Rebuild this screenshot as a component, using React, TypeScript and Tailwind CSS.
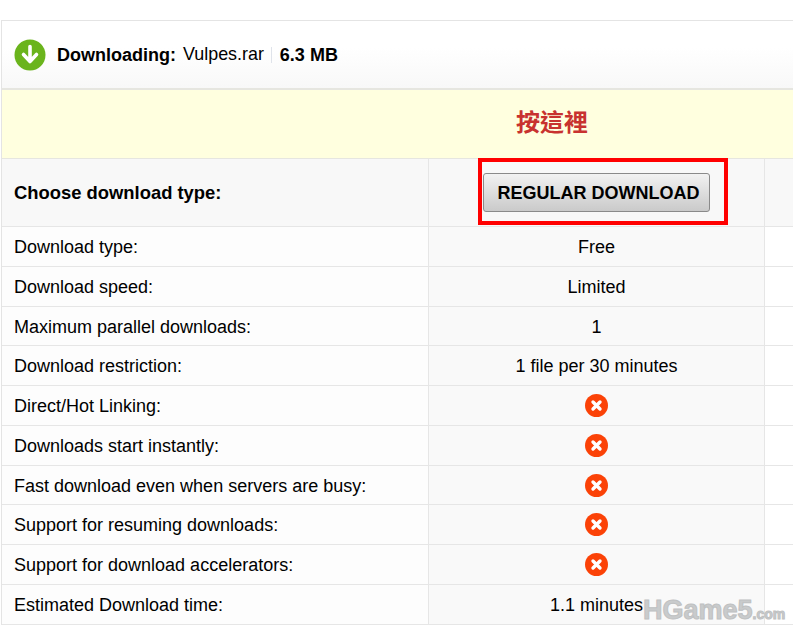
import React from "react";

const font = "font-['Liberation_Sans',Arial,sans-serif]";

function Cross() {
  return (
    <svg width="23" height="23" viewBox="0 0 23 23" className="block">
      <circle cx="11.5" cy="11.5" r="11.5" fill="#fb4207" />
      <path d="M8 8 L15 15 M15 8 L8 15" stroke="#fff" strokeWidth="3.4" strokeLinecap="round" />
    </svg>
  );
}

const rows: { label: string; value?: string; h: string }[] = [
  { label: "Download type:", value: "Free", h: "h-[40px]" },
  { label: "Download speed:", value: "Limited", h: "h-[40px]" },
  { label: "Maximum parallel downloads:", value: "1", h: "h-[39px]" },
  { label: "Download restriction:", value: "1 file per 30 minutes", h: "h-[40px]" },
  { label: "Direct/Hot Linking:", h: "h-[40px]" },
  { label: "Downloads start instantly:", h: "h-[40px]" },
  { label: "Fast download even when servers are busy:", h: "h-[39px]" },
  { label: "Support for resuming downloads:", h: "h-[40px]" },
  { label: "Support for download accelerators:", h: "h-[40px]" },
  { label: "Estimated Download time:", value: "1.1 minutes", h: "h-[40px]" },
];

export default function App() {
  return (
    <div className={`${font} relative w-[793px] h-[634px] overflow-hidden bg-white pt-[20px] pl-[1px] text-black`}>
      <div className="border-t border-l border-[#e4e4e4]">
        <div className="flex items-center h-[67px] pl-[12px] bg-gradient-to-b from-white from-40% to-[#f8f8f8]">
          <svg width="32" height="32" viewBox="0 0 32 32" className="block">
            <circle cx="16" cy="16" r="15.5" fill="#6ab41c" />
            <path d="M16 7.5 V22 M9.5 15.5 L16 22.5 L22.5 15.5" fill="none" stroke="#fff" strokeWidth="3.6" strokeLinecap="round" strokeLinejoin="round" />
          </svg>
          <span className="ml-[11px] text-[18px] font-bold leading-none">Downloading:</span>
          <span className="ml-[7px] text-[17.9px] leading-none">Vulpes.rar</span>
          <span className="ml-[7px] w-[1px] h-[16px] bg-[#dfe3ea]" />
          <span className="ml-[8px] text-[18px] font-bold leading-none">6.3 MB</span>
        </div>
        <div className="flex items-center h-[71px] pl-[514px] bg-[#ffffdf] border-t-2 border-b border-[#e6e6e0]">
          <span className="font-['Noto_Sans_CJK_TC',sans-serif] text-[24px] font-bold leading-none text-[#c8322f] pb-[6px]">按這裡</span>
        </div>
        <div className="flex h-[68px] bg-[#f8f8f8] border-b border-[#e6e6e6]">
          <div className="flex items-center w-[426px] pl-[12px] text-[18.4px] font-bold">Choose download type:</div>
          <div className="flex items-center justify-center w-[337px] border-l border-r border-[#e6e6e6]">
            <button className="w-[227px] h-[39px] rounded-[3px] border border-[#8a8a8a] bg-gradient-to-b from-[#f2f2f2] to-[#cacaca] pl-[4px] text-[18px] font-bold text-black leading-none">
              REGULAR DOWNLOAD
            </button>
          </div>
        </div>
        {rows.map((r) => (
          <div key={r.label} className={`flex ${r.h} border-b border-[#e6e6e6] text-[18px]`}>
            <div className="flex items-center w-[426px] pl-[12px] pt-[2px] bg-[#fdfdfd]">{r.label}</div>
            <div className="flex items-center justify-center w-[337px] border-l border-r border-[#e6e6e6] bg-[#f9f9f9]">
              {r.value ? <span className="pt-[2px]">{r.value}</span> : <Cross />}
            </div>
          </div>
        ))}
      </div>
      <div className="absolute left-[478px] top-[158px] w-[250px] h-[67px] border-4 border-[#ff0000]" />
      <div className="absolute left-[643px] top-[597px] font-bold leading-none text-[#c9cbcc] whitespace-nowrap [-webkit-text-stroke:1px_#bfc1c2]">
        <span className="text-[27px]">HGame5</span>
        <span className="text-[14px]">.com</span>
      </div>
    </div>
  );
}
